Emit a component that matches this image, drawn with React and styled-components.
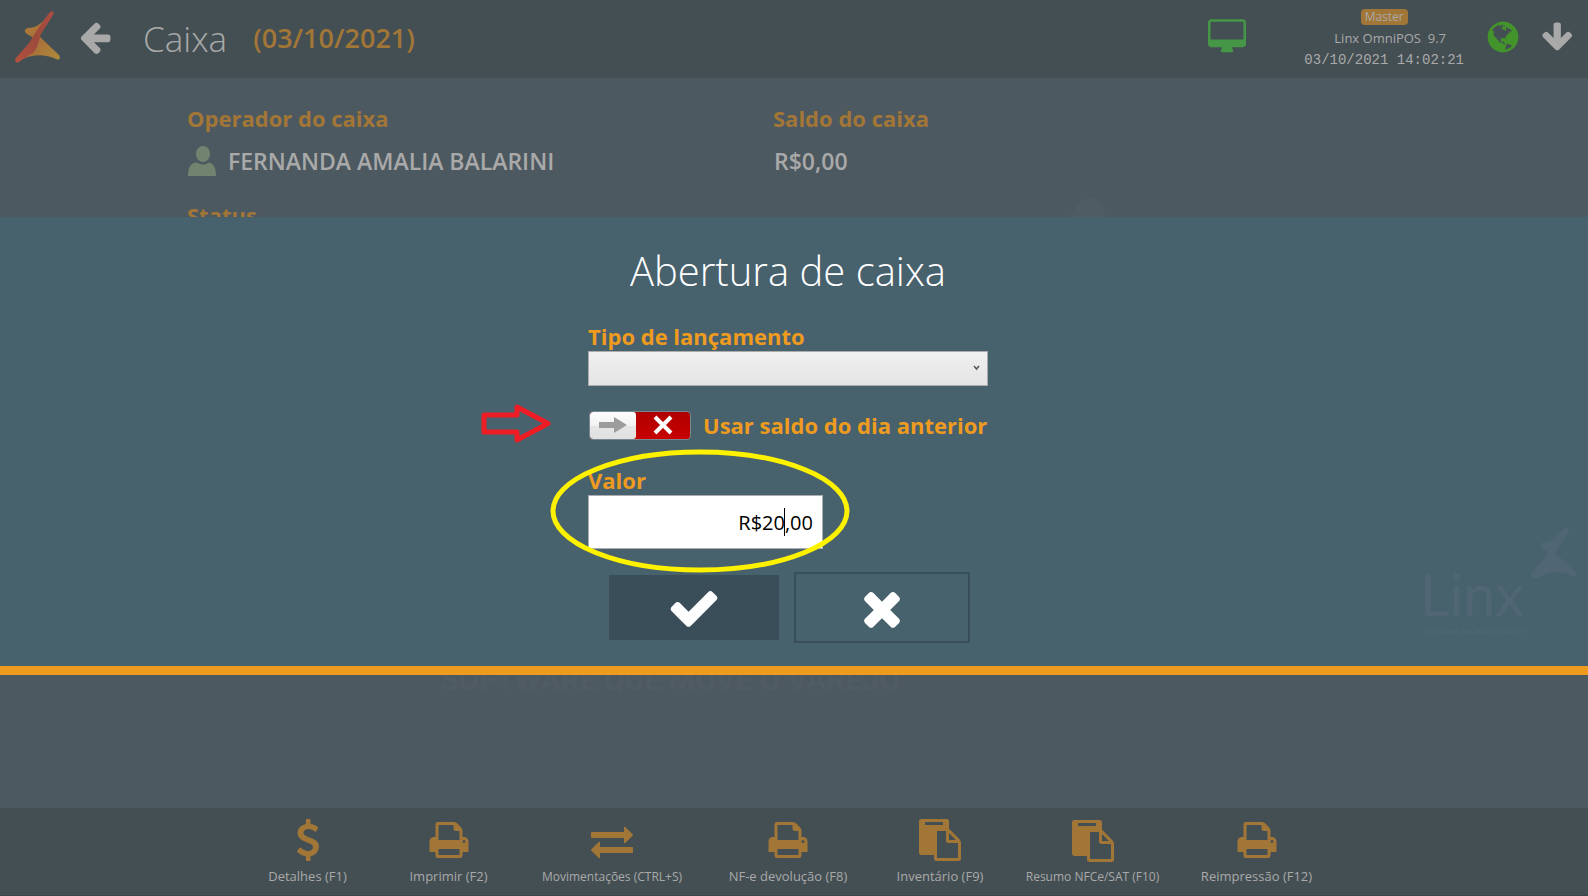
import React, { useState } from "react";
import styled, { createGlobalStyle } from "styled-components";

const GlobalStyle = createGlobalStyle`
  * {
    box-sizing: border-box;
  }
  body {
    margin: 0;
    font-family: "Open Sans", "Noto Sans", sans-serif;
    background: #4d5960;
  }
  h1, h2, h3, p, dl, dd {
    margin: 0;
  }
  button {
    font-family: inherit;
    padding: 0;
    border: 0;
    background: none;
    cursor: pointer;
  }
`;

const Page = styled.div`
  position: relative;
  display: flex;
  flex-direction: column;
  min-height: 100vh;
  overflow: hidden;
`;

const Header = styled.header`
  display: flex;
  align-items: center;
  height: 78px;
  padding: 0 15px 4px;
  background: #444f53;
  color: #a9a9a9;
`;

const IconButton = styled.button`
  display: flex;
  color: #a9a9a9;
`;

const BackButton = styled(IconButton)`
  margin-left: 16px;
`;

const PageTitle = styled.h1`
  margin-left: 30px;
  padding-top: 4px;
  font-size: 35px;
  line-height: 48px;
  font-weight: 300;
`;

const PageDate = styled.span`
  margin-left: 26px;
  padding-top: 2px;
  font-size: 27px;
  line-height: 40px;
  font-weight: 600;
  color: #a27637;
`;

const HeaderStatus = styled.div`
  display: flex;
  align-items: center;
  margin-left: auto;
  color: #459646;
`;

const SystemInfo = styled.div`
  display: flex;
  flex-direction: column;
  align-items: center;
  margin: 0 21px 0 58px;
  padding-top: 4px;
  color: #a9a9a9;
`;

const Badge = styled.span`
  padding: 0 4px;
  border-radius: 4px;
  background: #a27637;
  font-size: 12px;
  line-height: 16px;
`;

const Version = styled.span`
  margin-left: 12px;
  font-size: 13px;
  line-height: 26px;
  white-space: pre;
`;

const Clock = styled.time`
  font-family: "Liberation Mono", monospace;
  font-size: 14px;
  line-height: 18px;
`;

const GlobeWrapper = styled.div`
  display: flex;
  margin-right: 18px;
  color: #43942a;
`;

const Main = styled.main`
  position: relative;
  flex: 1;
  padding: 23px 229px 0 187px;
  overflow: hidden;
`;

const Details = styled.dl`
  position: relative;
  display: grid;
  grid-template-columns: 1fr 1fr;
  row-gap: 20px;
`;

const DetailLabel = styled.dt`
  font-size: 22px;
  line-height: 34px;
  font-weight: 700;
  color: #a27637;
`;

const DetailValue = styled.dd`
  display: flex;
  align-items: center;
  gap: 12px;
  height: 43px;
  padding: 8px 0 0 1px;
  font-size: 23px;
  line-height: 34px;
  font-weight: 600;
  color: #a9a9a9;
`;

const BigWatermark = styled.div`
  position: absolute;
  top: 118px;
  left: 50%;
  width: 702px;
  margin-left: -354px;
  color: #505c63;
`;

const SmallWatermark = styled.div`
  position: absolute;
  right: 11px;
  bottom: 26px;
  width: 152px;
  color: #506674;
`;

const Footer = styled.footer`
  display: flex;
  justify-content: center;
  height: 88px;
  padding-right: 14px;
  background: #444f53;
  border-bottom: 1px solid #3c4549;
`;

const Action = styled.button`
  display: flex;
  flex-direction: column;
  align-items: center;
  width: ${(props) => props.$width}px;
  padding-top: ${(props) => (props.$small ? 12 : 11)}px;
  color: #a27637;
`;

const ActionLabel = styled.span`
  margin-top: 5px;
  font-size: ${(props) => (props.$small ? 12 : 13)}px;
  line-height: 20px;
  white-space: nowrap;
  color: #a9a9a9;
`;

const Modal = styled.section`
  position: absolute;
  top: 217px;
  left: 0;
  right: 0;
  display: flex;
  flex-direction: column;
  align-items: center;
  height: 458px;
  padding: 26px 12px 0 0;
  background: #47616d;
  border-bottom: 9px solid #ee9b20;
`;

const ModalTitle = styled.h2`
  font-size: 40px;
  line-height: 56px;
  font-weight: 300;
  color: #fff;
`;

const Form = styled.form`
  position: relative;
  display: flex;
  flex-direction: column;
  width: 400px;
  margin-top: 22px;
`;

const FieldLabel = styled.label`
  font-size: 22px;
  line-height: 30px;
  font-weight: 700;
  color: #ee9b20;
  white-space: nowrap;
`;

const SelectWrapper = styled.div`
  position: relative;
  height: 35px;
`;

const Select = styled.select`
  width: 100%;
  height: 100%;
  padding: 0 24px 0 8px;
  appearance: none;
  border: 1px solid #acacac;
  border-radius: 0;
  background: linear-gradient(#f0f0f0, #e4e4e4);
  font-family: inherit;
  font-size: 16px;
`;

const Chevron = styled.svg`
  position: absolute;
  top: 14px;
  right: 8px;
  pointer-events: none;
`;

const ToggleRow = styled.div`
  display: flex;
  align-items: center;
  gap: 12px;
  height: 30px;
  margin-top: 24px;
`;

const Toggle = styled.div`
  position: relative;
  flex: none;
  display: flex;
  flex-direction: ${(props) => (props.$on ? "row-reverse" : "row")};
  width: 102px;
  height: 29px;
  margin-left: 1px;
  overflow: hidden;
  border: 1px solid #758791;
  border-radius: 4px;
  background: ${(props) =>
    props.$on ? "#3c9a2a" : "linear-gradient(#b00000, #c80000)"};
`;

const ToggleInput = styled.input`
  position: absolute;
  inset: 0;
  width: 100%;
  height: 100%;
  margin: 0;
  opacity: 0;
  cursor: pointer;
`;

const ToggleThumb = styled.span`
  display: flex;
  align-items: center;
  justify-content: center;
  width: 46px;
  border-radius: 3px;
  background: linear-gradient(#fdfdfd, #f2f2f2 50%, #e6e6e6 50%, #e0e0e0);
`;

const ToggleState = styled.span`
  display: flex;
  flex: 1;
  align-items: center;
  justify-content: center;
`;

const ValueField = styled.div`
  position: relative;
  display: flex;
  flex-direction: column;
  width: 235px;
  margin-top: 25px;
`;

const ValueInput = styled.input`
  width: 100%;
  height: 54px;
  padding: 1px 9px 0;
  border: 1px solid #abadb3;
  font-family: inherit;
  font-size: 20px;
  font-weight: 500;
  text-align: right;
  color: #000;
`;

const Caret = styled.span`
  position: absolute;
  right: 38px;
  bottom: 13px;
  width: 1px;
  height: 28px;
  background: #000;
`;

const Buttons = styled.div`
  display: flex;
  justify-content: center;
  gap: 12px;
  margin-top: 23px;
`;

const ModalButton = styled.button`
  display: flex;
  align-items: center;
  justify-content: center;
  width: 176px;
  height: 71px;
  border: ${(props) => (props.$primary ? "3px solid #47616d" : "2px solid #394e59")};
  background: ${(props) => (props.$primary ? "#394e59" : "transparent")};
  color: #fff;
`;

const ArrowMark = styled.svg`
  position: absolute;
  top: 83px;
  left: -107px;
  pointer-events: none;
`;

const EllipseMark = styled.svg`
  position: absolute;
  top: 128px;
  left: -38px;
  pointer-events: none;
`;

const paths = {
  arrow:
    "M1664 896v128q0 53-32.5 90.5t-84.5 37.5h-704l293 294q38 36 38 90t-38 90l-75 76q-37 37-90 37-52 0-91-37l-651-652q-37-37-37-90 0-52 37-91l651-650q38-38 91-38 52 0 90 38l75 74q38 38 38 91t-38 91l-293 293h704q52 0 84.5 37.5t32.5 90.5z",
  check:
    "M1671 566q0 40-28 68l-724 724-136 136q-28 28-68 28t-68-28l-136-136-362-362q-28-28-28-68t28-68l136-136q28-28 68-28t68 28l294 295 656-657q28-28 68-28t68 28l136 136q28 28 28 68z",
  times:
    "M1490 1322q0 40-28 68l-136 136q-28 28-68 28t-68-28l-294-294-294 294q-28 28-68 28t-68-28l-136-136q-28-28-28-68t28-68l294-294-294-294q-28-28-28-68t28-68l136-136q28-28 68-28t68 28l294 294 294-294q28-28 68-28t68 28l136 136q28 28 28 68t-28 68l-294 294 294 294q28 28 28 68z",
  desktop:
    "M1792 992v-832q0-13-9.5-22.5t-22.5-9.5h-1600q-13 0-22.5 9.5t-9.5 22.5v832q0 13 9.5 22.5t22.5 9.5h1600q13 0 22.5-9.5t9.5-22.5zm128-832v1088q0 66-47 113t-113 47h-544q0 37 16 77.5t32 71 16 43.5q0 26-19 45t-45 19h-512q-26 0-45-19t-19-45q0-14 16-44t32-70 16-78h-544q-66 0-113-47t-47-113v-1088q0-66 47-113t113-47h1600q66 0 113 47t47 113z",
  print:
    "M448 1536h896v-256h-896v256zm0-640h896v-384h-160q-40 0-68-28t-28-68v-160h-640v640zm1152 64q0-26-19-45t-45-19-45 19-19 45 19 45 45 19 45-19 19-45zm128 0v416q0 13-9.5 22.5t-22.5 9.5h-224v160q0 40-28 68t-68 28h-960q-40 0-68-28t-28-68v-160h-224q-13 0-22.5-9.5t-9.5-22.5v-416q0-79 56.5-135.5t135.5-56.5h64v-544q0-40 28-68t68-28h672q40 0 88 20t76 48l152 152q28 28 48 76t20 88v256h64q79 0 135.5 56.5t56.5 135.5z",
  paste:
    "M768 1664h896v-640h-416q-40 0-68-28t-28-68v-416h-384v1152zm256-1440v-64q0-13-9.5-22.5t-22.5-9.5h-704q-13 0-22.5 9.5t-9.5 22.5v64q0 13 9.5 22.5t22.5 9.5h704q13 0 22.5-9.5t9.5-22.5zm256 672h299l-299-299v299zm512 128v672q0 40-28 68t-68 28h-960q-40 0-68-28t-28-68v-160h-544q-40 0-68-28t-28-68v-1344q0-40 28-68t68-28h1088q40 0 68 28t28 68v328q21 13 36 28l408 408q28 28 48 76t20 88z",
  dollar:
    "M1362 1185q0 153-99.5 263.5t-258.5 136.5v175q0 14-9 23t-23 9h-135q-13 0-22.5-9.5t-9.5-22.5v-175q-66-9-127.5-31t-101.5-44.5-74-48-46.5-37.5-17.5-18q-17-21-2-41l103-135q7-10 23-12 15-2 24 9l2 2q113 99 243 125 37 8 74 8 81 0 142.5-43t61.5-122q0-28-15-53t-33.5-42-58.5-37.5-66-32-80-32.5q-39-16-61.5-25t-61.5-26.5-62.5-31-56.5-35.5-53.5-42.5-43.5-49-35.5-58-21-66.5-8.5-78q0-138 98-242t255-134v-180q0-13 9.5-22.5t22.5-9.5h135q14 0 23 9t9 23v176q57 6 110.5 23t87 33.5 63.5 37.5 39 29 15 14q17 18 5 38l-81 146q-8 15-23 16-14 3-27-7-3-3-14.5-12t-39-26.5-58.5-32-74.5-26-85.5-11.5q-95 0-155 43t-60 111q0 26 8.5 48t29.5 41.5 39.5 33 56 31 60.5 27 70 27.5q53 20 81 31.5t76 35 75.5 42.5 62 50 53 63.5 31.5 76.5 13 94z",
  exchange:
    "M1792 1184v192q0 13-9.5 22.5t-22.5 9.5h-1376v192q0 13-9.5 22.5t-22.5 9.5q-12 0-24-10l-319-320q-9-9-9-22 0-14 9-23l320-320q9-9 23-9 13 0 22.5 9.5t9.5 22.5v192h1376q13 0 22.5 9.5t9.5 22.5zm0-544q0 14-9 23l-320 320q-9 9-23 9-13 0-22.5-9.5t-9.5-22.5v-192h-1376q-13 0-22.5-9.5t-9.5-22.5v-192q0-13 9.5-22.5t22.5-9.5h1376v-192q0-14 9-23t23-9q12 0 24 10l319 319q9 9 9 23z",
  globe:
    "M896 128q209 0 385.5 103t279.5 279.5 103 385.5-103 385.5-279.5 279.5-385.5 103-385.5-103-279.5-279.5-103-385.5 103-385.5 279.5-279.5 385.5-103zm274 521q-2 1-9.5 9.5t-13.5 9.5q2 0 4.5-5t5-11 3.5-7q6-7 22-15 14-6 52-12 34-8 51 11-2-2 9.5-13t14.5-12q3-2 15-4.5t15-7.5l2-22q-12 1-17.5-7t-6.5-21q0 2-6 8 0-7-4.5-8t-11.5 1-9 1q-10-3-15-7.5t-8-16.5-4-15q-2-5-9.5-11t-9.5-10q-1-2-2.5-5.5t-3-6.5-4-5.5-5.5-2.5-7 5-7.5 10-4.5 5q-3-2-6-1.5t-4.5 1-4.5 3-5 3.5q-3 2-8.5 3t-8.5 2q15-5-1-11-10-4-16-3 9-4 7.5-12t-8.5-14h5q-1-4-8.5-8.5t-17.5-8.5-13-6q-8-5-34-9.5t-33-.5q-5 6-4.5 10.5t4 14 3.5 12.5q1 6-5.5 13t-6.5 12q0 7 14 15.5t10 21.5q-3 8-16 16t-16 12q-5 8-1.5 18.5t10.5 16.5q2 2 1.5 4t-3.5 4.5-5.5 4-6.5 3.5l-3 2q-11 5-20.5-6t-13.5-26q-7-25-16-30-23-8-29 1-5-13-41-26-25-9-58-4 6-1 0-15-7-15-19-12 3-6 4-17.5t1-13.5q3-13 12-23 1-1 7-8.5t9.5-13.5.5-6q35 4 50-11 5-5 11.5-17t10.5-17q9-6 14-5.5t14.5 5.5 14.5 5q14 1 15.5-11t-7.5-20q12 1 3-17-5-7-8-9-12-4-27 5-8 4 2 8-1-1-9.5 10.5t-16.5 17.5-16-5q-1-1-5.5-13.5t-9.5-13.5q-8 0-16 15 3-8-11-15t-24-8q19-12-8-27-7-4-20.5-5t-19.5 4q-5 7-5.5 11.5t5 8 10.5 5.5 11.5 4 8.5 3q14 10 8 14-2 1-8.5 3.5t-11.5 4.5-6 4q-3 4 0 14t-2 14q-5-5-9-17.5t-7-16.5q7 9-25 6l-10-1q-4 0-16 2t-20.5 1-13.5-8q-4-8 0-20 1-4 4-2-4-3-11-9.5t-10-8.5q-46 15-94 41 6 1 12-1 5-2 13-6.5t10-5.5q34-14 42-7l5-5q14 16 20 25-7-4-30-1-20 6-22 12 7 12 5 18-4-3-11.5-10t-14.5-11-15-5q-16 0-22 1-146 80-235 222 7 7 12 8 4 1 5 9t2.5 11 11.5-3q9 8 3 19 1-1 44 27 19 17 21 21 3 11-10 18-1-2-9-9t-9-4q-3 5 .5 18.5t10.5 12.5q-7 0-9.5 16t-2.5 35.5-1 23.5l2 1q-3 12 5.5 34.5t21.5 19.5q-13 3 20 43 6 8 8 9 3 2 12 7.5t15 10 10 10.5q4 5 10 22.5t14 23.5q-2 6 9.5 20t10.5 23q-1 0-2.5 1t-2.5 1q3 7 15.5 14t15.5 13q1 3 2 10t3 11 8 2q2-20-24-62-15-25-17-29-3-5-5.5-15.5t-4.5-14.5q2 0 6 1.5t8.5 3.5 7.5 4 2 3q-3 7 2 17.5t12 18.5 17 19 12 13q6 6 14 19.5t0 13.5q9 0 20 10t17 20q5 8 8 26t5 24q2 7 8.5 13.5t12.5 9.5l16 8 13 7q5 2 18.5 10.5t21.5 11.5q10 4 16 4t14.5-2.5 13.5-3.5q15-2 29 15t21 21q36 19 55 11-2 1 .5 7.5t8 15.5 9 14.5 5.5 8.5q5 6 18 15t18 15q6-4 7-9-3 8 7 20t18 10q14-3 14-32-31 15-49-18 0-1-2.5-5.5t-4-8.5-2.5-8.5 0-7.5 5-3q9 0 10-3.5t-2-12.5-4-13q-1-8-11-20t-12-15q-5 9-16 8t-16-9q0 1-1.5 5.5t-1.5 6.5q-13 0-15-1 1-3 2.5-17.5t3.5-22.5q1-4 5.5-12t7.5-14.5 4-12.5-4.5-9.5-17.5-2.5q-19 1-26 20-1 3-3 10.5t-5 11.5-9 7q-7 3-24 2t-24-5q-13-8-22.5-29t-9.5-37q0-10 2.5-26.5t3-25-5.5-24.5q3-2 9-9.5t10-10.5q2-1 4.5-1.5t4.5 0 4-1.5 3-6q-1-1-4-3-3-3-4-3 7 3 28.5-1.5t27.5 1.5q15 11 22-2 0-1-2.5-9.5t-.5-13.5q5 27 29 9 3 3 15.5 5t17.5 5q3 2 7 5.5t5.5 4.5 5-.5 8.5-6.5q10 14 12 24 11 40 19 44 7 3 11 2t4.5-9.5 0-14-1.5-12.5l-1-8v-18l-1-8q-15-3-18.5-12t1.5-18.5 15-18.5q1-1 8-3.5t15.5-6.5 12.5-8q21-19 15-35 7 0 11-9-1 0-5-3t-7.5-5-4.5-2q9-5 2-16 5-3 7.5-11t7.5-10q9 12 21 2 7-8 1-16 5-7 20.5-10.5t18.5-9.5q7 2 8-2t1-12 3-12q4-5 15-9t13-5l17-11q3-4 0-4 18 2 31-11 10-11-6-20 3-6-3-9.5t-15-5.5q3-1 11.5-.5t10.5-1.5q15-10-7-16-17-5-43 12zm-163 877q206-36 351-189-3-3-12.5-4.5t-12.5-3.5q-18-7-24-8 1-7-2.5-13t-8-9-12.5-8-11-7q-2-2-7-6t-7-5.5-7.5-4.5-8.5-2-10 1l-3 1q-3 1-5.5 2.5t-5.5 3-4 3 0 2.5q-21-17-36-22-5-1-11-5.5t-10.5-7-10-1.5-11.5 7q-5 5-6 15t-2 13q-7-5 0-17.5t2-18.5q-3-6-10.5-4.5t-12 4.5-11.5 8.5-9 6.5-8.5 5.5-8.5 7.5q-3 4-6 12t-5 11q-2-4-11.5-6.5t-9.5-5.5q2 10 4 35t5 38q7 31-12 48-27 25-29 40-4 22 12 26 0 7-8 20.5t-7 21.5q0 6 2 16z",
};

const Icon = ({ name, size, rotate = 0 }) => (
  <svg width={size} height={size} viewBox="0 0 1792 1792" aria-hidden="true">
    <path
      d={paths[name]}
      fill="currentColor"
      transform={`rotate(${rotate} 896 896)`}
    />
  </svg>
);

const Logo = () => (
  <svg width="46" height="53" viewBox="0 0 46 53" role="img" aria-label="Linx">
    <defs>
      <linearGradient id="wing" x1="0" y1="0" x2="1" y2="1">
        <stop offset="0" stopColor="#b08038" />
        <stop offset="0.5" stopColor="#a9703b" />
        <stop offset="1" stopColor="#ad8b3b" />
      </linearGradient>
      <linearGradient id="blade" x1="0" y1="1" x2="1" y2="0">
        <stop offset="0" stopColor="#b5503f" />
        <stop offset="0.5" stopColor="#9c4b3c" />
        <stop offset="1" stopColor="#ad4c42" />
      </linearGradient>
    </defs>
    <path
      d="M33 4C27 12 22 17 13 17C9 18 9 21 12 23L19 27L8 48C18 43 30 43 41 48C44 50 46 47 44 44L24 25Z"
      fill="url(#wing)"
    />
    <path
      d="M35 1C37-1 40 1 38 4L26 23C24 27 24 36 18 42C13 45 8 48 4 51C1 53-1 50 1 47L14 32C20 22 28 10 35 1Z"
      fill="url(#blade)"
    />
  </svg>
);

const Watermark = ({ showName }) => (
  <svg width="100%" viewBox="0 0 702 500" fill="currentColor">
    <path d="M640 6C650-4 670 4 664 24L600 118L694 206C706 220 690 234 676 226C640 200 570 200 520 236C502 246 484 232 492 214L570 118L546 102C528 90 530 74 546 72C592 74 612 40 640 6Z" />
    {showName && (
      <text x="-24" y="411" fontFamily="Lato" fontSize="266">
        Linx
      </text>
    )}
    <text x="0" y="494" fontFamily="Roboto" fontWeight="700" fontSize="30">
      SOFTWARE QUE MOVE O VAREJO
    </text>
  </svg>
);

const actions = [
  { label: "Detalhes (F1)", icon: "dollar", width: 141 },
  { label: "Imprimir (F2)", icon: "print", width: 141 },
  {
    label: "Movimentações (CTRL+S)",
    icon: "exchange",
    width: 186,
    small: true,
  },
  { label: "NF-e devolução (F8)", icon: "print", width: 166 },
  { label: "Inventário (F9)", icon: "paste", width: 138 },
  { label: "Resumo NFCe/SAT (F10)", icon: "paste", width: 167, small: true },
  { label: "Reimpressão (F12)", icon: "print", width: 161 },
];

function App() {
  const [usePreviousBalance, setUsePreviousBalance] = useState(false);
  const [value, setValue] = useState("R$20,00");

  return (
    <Page>
      <GlobalStyle />
      <Header>
        <Logo />
        <BackButton aria-label="Voltar">
          <Icon name="arrow" size={36} />
        </BackButton>
        <PageTitle>Caixa</PageTitle>
        <PageDate>(03/10/2021)</PageDate>
        <HeaderStatus>
          <svg width="38" height="36" viewBox="0 0 1920 1792">
            <path d={paths.desktop} fill="currentColor" />
          </svg>
          <SystemInfo>
            <Badge>Master</Badge>
            <Version>{"Linx OmniPOS  9.7"}</Version>
            <Clock>03/10/2021 14:02:21</Clock>
          </SystemInfo>
          <GlobeWrapper>
            <Icon name="globe" size={36} />
          </GlobeWrapper>
          <IconButton aria-label="Abrir menu">
            <Icon name="arrow" size={34} rotate={-90} />
          </IconButton>
        </HeaderStatus>
      </Header>

      <Main>
        <BigWatermark>
          <Watermark />
        </BigWatermark>
        <Details>
          <div>
            <DetailLabel>Operador do caixa</DetailLabel>
            <DetailValue>
              <svg width="28" height="30" viewBox="0 0 28 30" fill="#72846f">
                <ellipse cx="15" cy="8" rx="7" ry="8" />
                <path d="M0 30C0 23 2 18 6 17Q8 16 10 17Q15 20 20 17Q22 16 24 18C27 20 28 25 28 30Z" />
              </svg>
              FERNANDA AMALIA BALARINI
            </DetailValue>
          </div>
          <div>
            <DetailLabel>Saldo do caixa</DetailLabel>
            <DetailValue>R$0,00</DetailValue>
          </div>
          <div>
            <DetailLabel>Status</DetailLabel>
          </div>
        </Details>
      </Main>

      <Footer>
        {actions.map((a) => (
          <Action key={a.label} $width={a.width} $small={a.small}>
            <Icon name={a.icon} size={42} />
            <ActionLabel $small={a.small}>{a.label}</ActionLabel>
          </Action>
        ))}
      </Footer>

      <Modal role="dialog" aria-labelledby="modal-title">
        <SmallWatermark>
          <Watermark showName />
        </SmallWatermark>
        <ModalTitle id="modal-title">Abertura de caixa</ModalTitle>
        <Form onSubmit={(e) => e.preventDefault()}>
          <FieldLabel htmlFor="tipo">Tipo de lançamento</FieldLabel>
          <SelectWrapper>
            <Select id="tipo" defaultValue="">
              <option value=""></option>
            </Select>
            <Chevron width="7" height="6" viewBox="0 0 7 6">
              <path
                d="M1 1L3.5 4L6 1"
                fill="none"
                stroke="#555"
                strokeWidth="1.5"
              />
            </Chevron>
          </SelectWrapper>
          <ToggleRow>
            <Toggle $on={usePreviousBalance}>
              <ToggleThumb>
                <svg width="28" height="16" viewBox="0 0 28 16">
                  <path d="M0 5H15V0L28 8L15 16V11H0Z" fill="#9c9c9c" />
                </svg>
              </ToggleThumb>
              <ToggleState>
                <svg width="20" height="20" viewBox="0 0 20 20">
                  <path
                    d={usePreviousBalance ? "M2 10L8 16L18 4" : "M2 2L18 18M18 2L2 18"}
                    fill="none"
                    stroke="#fff"
                    strokeWidth="4"
                  />
                </svg>
              </ToggleState>
              <ToggleInput
                id="saldo"
                type="checkbox"
                checked={usePreviousBalance}
                onChange={(e) => setUsePreviousBalance(e.target.checked)}
              />
            </Toggle>
            <FieldLabel htmlFor="saldo">Usar saldo do dia anterior</FieldLabel>
          </ToggleRow>
          <ValueField>
            <FieldLabel htmlFor="valor">Valor</FieldLabel>
            <ValueInput
              id="valor"
              value={value}
              onChange={(e) => setValue(e.target.value)}
            />
            <Caret />
          </ValueField>
          <Buttons>
            <ModalButton type="submit" $primary aria-label="Confirmar">
              <Icon name="check" size={54} />
            </ModalButton>
            <ModalButton type="button" aria-label="Cancelar">
              <Icon name="times" size={54} />
            </ModalButton>
          </Buttons>
          <ArrowMark width="72" height="40" viewBox="0 0 72 40">
            <path
              d="M3 11H36V3L67 19.5L36 36V28H3Z"
              fill="none"
              stroke="#ee1c24"
              strokeWidth="5"
              strokeLinejoin="round"
            />
          </ArrowMark>
          <EllipseMark width="300" height="124" viewBox="0 0 300 124">
            <ellipse
              cx="150"
              cy="62"
              rx="147"
              ry="59"
              fill="none"
              stroke="#fff200"
              strokeWidth="5"
            />
          </EllipseMark>
        </Form>
      </Modal>
    </Page>
  );
}

export default App;
